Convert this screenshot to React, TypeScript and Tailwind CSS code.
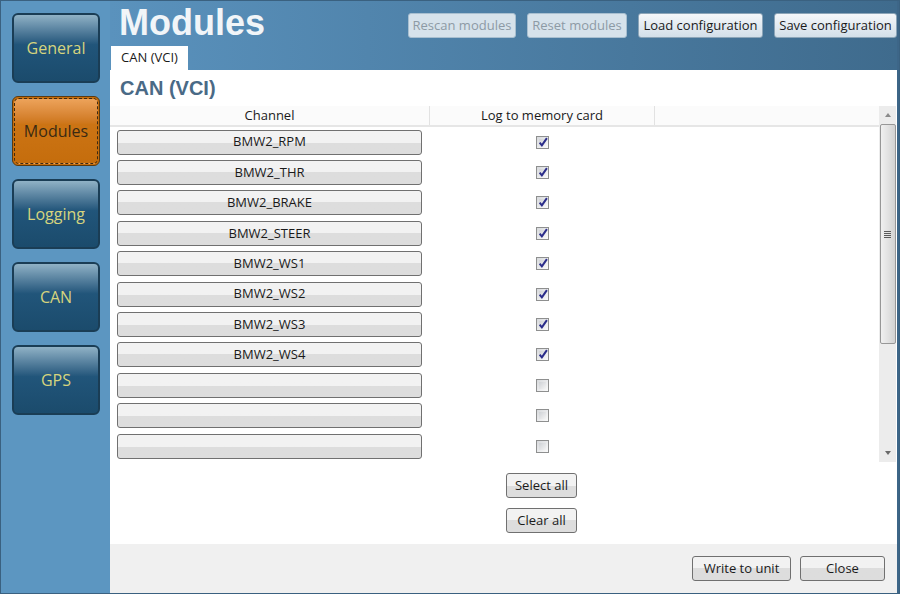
import React from "react";

const font = { fontFamily: '"Open Sans", "Noto Sans", "Liberation Sans", sans-serif' };

const channels = [
  "BMW2_RPM",
  "BMW2_THR",
  "BMW2_BRAKE",
  "BMW2_STEER",
  "BMW2_WS1",
  "BMW2_WS2",
  "BMW2_WS3",
  "BMW2_WS4",
  "",
  "",
  "",
];

function NavButton({ label, active }: { label: string; active?: boolean }) {
  if (active) {
    return (
      <div className="w-[88px] h-[70px] rounded-[6px] border border-[#5a3a10] p-[1px] bg-[#c56d0c]">
        <div className="w-full h-full rounded-[5px] border border-dashed border-[#3d2a12] bg-gradient-to-b from-[#eda35a] via-[#cc7414] via-40% to-[#c56d0c] flex items-center justify-center text-[16px] text-[#3a2a12]">
          {label}
        </div>
      </div>
    );
  }
  return (
    <div className="w-[88px] h-[70px] rounded-[6px] border-2 border-[#1a3d55] bg-gradient-to-b from-[#90b2c6] via-[#21557a] via-45% to-[#1b4b6c] flex items-center justify-center text-[16px] text-[#d6d47e]">
      {label}
    </div>
  );
}

function TopButton({ label, disabled, w }: { label: string; disabled?: boolean; w: string }) {
  return (
    <div
      className={
        w +
        " h-[25px] rounded-[3px] flex items-center justify-center text-[13px] " +
        (disabled
          ? "border border-[#a8bfd0] bg-[#d6e2eb] text-[#8d9aa5]"
          : "border border-[#8ca5b8] bg-gradient-to-b from-[#f4f7fa] to-[#d3dfe9] text-[#1a1a1a]")
      }
    >
      {label}
    </div>
  );
}

function GrayButton({ label, w }: { label: string; w: string }) {
  return (
    <div
      className={
        w +
        " h-[25px] rounded-[3px] border border-[#707070] bg-gradient-to-b from-[#f2f2f2] from-50% to-[#dddddd] to-50% flex items-center justify-center text-[13px] text-[#1a1a1a]"
      }
    >
      {label}
    </div>
  );
}

function Checkbox({ checked }: { checked: boolean }) {
  return (
    <div className="w-[13px] h-[13px] border border-[#8e8f8f] bg-gradient-to-br from-[#d7d9dc] to-[#fbfbfb] p-[2px]">
      <div className="w-full h-full bg-gradient-to-br from-[#cfd2d6] to-[#f4f4f4] relative">
        {checked && (
          <svg viewBox="0 0 9 9" className="absolute -left-[1px] -top-[2px] w-[10px] h-[10px]">
            <path d="M1.5 5 L3.5 7.5 L8 1" fill="none" stroke="#2b2d8a" strokeWidth="1.8" />
          </svg>
        )}
      </div>
    </div>
  );
}

export default function App() {
  return (
    <div
      className="w-[900px] h-[594px] flex border border-[#3a6180] overflow-hidden bg-[#5c96c1]"
      style={font}
    >
      {/* Sidebar */}
      <div className="w-[109px] shrink-0 bg-[#5c96c1] flex flex-col items-center pt-[12px] gap-[13px] pl-[1px]">
        <NavButton label="General" />
        <NavButton label="Modules" active />
        <NavButton label="Logging" />
        <NavButton label="CAN" />
        <NavButton label="GPS" />
      </div>

      {/* Main */}
      <div className="flex-1 flex flex-col border-r-2 border-[#3d6688]">
        {/* Header */}
        <div className="h-[69px] shrink-0 bg-gradient-to-r from-[#5a92bd] to-[#3f6b8d] flex flex-col">
          <div className="flex-1 flex items-start justify-between">
            <div
              className="pl-[9px] pt-[1px] text-[36px] font-bold leading-[42px] text-[#f1f5f8]"
              style={{ fontFamily: '"Liberation Sans", Arial, sans-serif' }}
            >
              Modules
            </div>
            <div className="flex gap-[11px] pt-[12px] pr-0">
              <TopButton label="Rescan modules" disabled w="w-[108px]" />
              <TopButton label="Reset modules" disabled w="w-[100px]" />
              <TopButton label="Load configuration" w="w-[125px]" />
              <TopButton label="Save configuration" w="w-[123px]" />
            </div>
          </div>
          <div className="flex">
            <div className="h-[24px] w-[77px] ml-[1px] bg-white flex items-center justify-center text-[13px] text-[#1a1a1a]">
              CAN (VCI)
            </div>
          </div>
        </div>

        {/* Content */}
        <div className="flex-1 bg-white flex flex-col">
          <div
            className="h-[36px] pl-[10px] pt-[5px] text-[20px] font-bold text-[#4a6a86] leading-[26px]"
            style={{ fontFamily: '"Liberation Sans", Arial, sans-serif' }}
          >
            CAN (VCI)
          </div>

          {/* Table area */}
          <div className="h-[356px] flex pr-[1px]">
            <div className="flex-1 flex flex-col">
              <div className="h-[21px] flex border-b-2 border-[#e6e6e6] bg-[#fbfbfb] text-[13px] text-[#1a1a1a]">
                <div className="w-[320px] flex items-center justify-center border-r border-[#e2e2e2]">
                  Channel
                </div>
                <div className="w-[225px] flex items-center justify-center border-r border-[#e2e2e2]">
                  Log to memory card
                </div>
              </div>
              <div className="flex flex-col">
                {channels.map((c, i) => (
                  <div key={i} className="h-[30.4px] flex items-center">
                    <div className="w-[320px] pl-[7px]">
                      <GrayButton label={c} w="w-[305px]" />
                    </div>
                    <div className="w-[225px] flex justify-center">
                      <Checkbox checked={c !== ""} />
                    </div>
                  </div>
                ))}
              </div>
            </div>
            {/* Scrollbar */}
            <div className="w-[17px] bg-[#ececec] flex flex-col items-center">
              <div className="h-[18px] w-full flex items-center justify-center">
                <div className="w-0 h-0 border-l-[3px] border-r-[3px] border-b-[4px] border-l-transparent border-r-transparent border-b-[#8a8a8a]" />
              </div>
              <div className="h-[220px] w-[16px] rounded-[2px] border border-[#979797] bg-gradient-to-r from-[#f0f0f0] via-[#e2e2e2] to-[#d2d2d2] flex items-center justify-center">
                <div className="flex flex-col gap-[1px]">
                  <div className="w-[7px] h-[1px] bg-[#5a5a5a]" />
                  <div className="w-[7px] h-[1px] bg-[#5a5a5a]" />
                  <div className="w-[7px] h-[1px] bg-[#5a5a5a]" />
                  <div className="w-[7px] h-[1px] bg-[#5a5a5a]" />
                </div>
              </div>
              <div className="flex-1" />
              <div className="h-[18px] w-full flex items-center justify-center">
                <div className="w-0 h-0 border-l-[3px] border-r-[3px] border-t-[4px] border-l-transparent border-r-transparent border-t-[#6a6a6a]" />
              </div>
            </div>
          </div>

          {/* Select / Clear */}
          <div className="flex flex-col items-start pl-[396px] pt-[11px] gap-[10px]">
            <GrayButton label="Select all" w="w-[71px]" />
            <GrayButton label="Clear all" w="w-[71px]" />
          </div>
          <div className="flex-1" />

          {/* Footer */}
          <div className="h-[49px] bg-[#f0f0f0] flex items-start justify-end pt-[12px] pr-[12px] gap-[9px]">
            <GrayButton label="Write to unit" w="w-[99px]" />
            <GrayButton label="Close" w="w-[85px]" />
          </div>
        </div>
      </div>
    </div>
  );
}
